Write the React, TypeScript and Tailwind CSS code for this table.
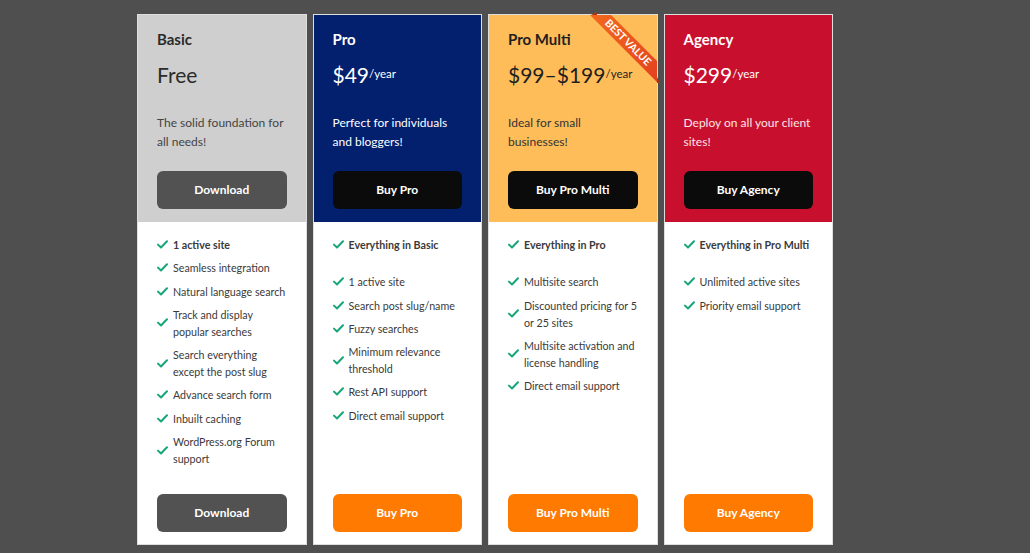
import React from 'react'

type Plan = {
    name: string
    price: string
    per?: boolean
    desc: string
    cta: string
    headerBg: string
    headerText: string
    descText: string
    ctaBg: string
    bottomBg: string
    bottomCta: string
    features: string[]
    firstGap: boolean
    ribbon?: boolean
}

const plans: Plan[] = [
    {
        name: 'Basic',
        price: 'Free',
        desc: 'The solid foundation for all needs!',
        cta: 'Download',
        headerBg: 'bg-[#cfcfcf]',
        headerText: 'text-[#2b2b2b]',
        descText: 'text-[#444]',
        ctaBg: 'bg-[#525252]',
        bottomBg: 'bg-[#525252]',
        bottomCta: 'Download',
        firstGap: false,
        features: [
            '1 active site',
            'Seamless integration',
            'Natural language search',
            'Track and display popular searches',
            'Search everything except the post slug',
            'Advance search form',
            'Inbuilt caching',
            'WordPress.org Forum support',
        ],
    },
    {
        name: 'Pro',
        price: '$49',
        per: true,
        desc: 'Perfect for individuals and bloggers!',
        cta: 'Buy Pro',
        headerBg: 'bg-[#03206f]',
        headerText: 'text-white',
        descText: 'text-white',
        ctaBg: 'bg-[#0b0b0b]',
        bottomBg: 'bg-[#ff7a00]',
        bottomCta: 'Buy Pro',
        firstGap: true,
        features: [
            'Everything in Basic',
            '1 active site',
            'Search post slug/name',
            'Fuzzy searches',
            'Minimum relevance threshold',
            'Rest API support',
            'Direct email support',
        ],
    },
    {
        name: 'Pro Multi',
        price: '$99–$199',
        per: true,
        desc: 'Ideal for small businesses!',
        cta: 'Buy Pro Multi',
        headerBg: 'bg-[#ffbd59]',
        headerText: 'text-[#1f1f1f]',
        descText: 'text-[#333]',
        ctaBg: 'bg-[#0b0b0b]',
        bottomBg: 'bg-[#ff7a00]',
        bottomCta: 'Buy Pro Multi',
        firstGap: true,
        ribbon: true,
        features: [
            'Everything in Pro',
            'Multisite search',
            'Discounted pricing for 5 or 25 sites',
            'Multisite activation and license handling',
            'Direct email support',
        ],
    },
    {
        name: 'Agency',
        price: '$299',
        per: true,
        desc: 'Deploy on all your client sites!',
        cta: 'Buy Agency',
        headerBg: 'bg-[#c8102e]',
        headerText: 'text-white',
        descText: 'text-[#fbe3e6]',
        ctaBg: 'bg-[#0b0b0b]',
        bottomBg: 'bg-[#ff7a00]',
        bottomCta: 'Buy Agency',
        firstGap: true,
        features: ['Everything in Pro Multi', 'Unlimited active sites', 'Priority email support'],
    },
]

const Check = () => (
    <svg width="11" height="9" viewBox="0 0 11 9" className="shrink-0">
        <path d="M1 4.6 L4 7.5 L10 1.3" fill="none" stroke="#17a57a" strokeWidth="2" strokeLinecap="round" strokeLinejoin="round" />
    </svg>
)

const Ribbon = () => (
    <>
        <div className="absolute -top-[3px] left-[102px] w-0 h-0 border-l-[6px] border-l-transparent border-b-[3px] border-b-[#a8380f]" />
        <div className="absolute top-[62px] -right-[3px] w-0 h-0 border-t-[6px] border-t-transparent border-l-[3px] border-l-[#a8380f]" />
        <div className="absolute top-0 right-0 w-[67px] h-[67px] overflow-hidden">
            <div className="absolute left-[-12px] top-[20px] w-[100px] h-[15px] rotate-45 bg-gradient-to-r from-[#f46a1c] to-[#e2401f] flex items-center justify-center">
                <span className="text-white text-[10.5px] font-bold leading-none">BEST VALUE</span>
            </div>
        </div>
    </>
)

const PlanCard = ({ plan }: { plan: Plan }) => (
    <div className="relative w-[169.5px] h-[531px] flex flex-col bg-white border border-[#dedede]">
        {plan.ribbon && <Ribbon />}
        <div className={`${plan.headerBg} px-[19px] pt-[14px] pb-[13px] shrink-0`}>
            <h3 className={`${plan.headerText} text-[15px] font-bold leading-[20px]`}>{plan.name}</h3>
            <div className={`${plan.headerText} mt-[12px] h-[28px] text-[21px] leading-[28px] whitespace-nowrap`}>
                {plan.price}
                {plan.per && <span className="relative -top-[5px] text-[11.5px] leading-none">/year</span>}
            </div>
            <p className={`${plan.descText} mt-[24px] text-[12px] leading-[19px]`}>{plan.desc}</p>
            <button className={`${plan.ctaBg} mt-[20px] w-full h-[38px] rounded-[6px] text-white text-[12px] font-bold`}>
                {plan.cta}
            </button>
        </div>
        <div className="flex-1 flex flex-col px-[19px] pt-[14px] pb-[12px]">
            <ul className="flex flex-col gap-[6.3px]">
                {plan.features.map((f, i) => (
                    <li
                        key={f}
                        className={`flex items-center gap-[5px] text-[10.7px] leading-[17px] text-[#3a3a3a] ${
                            i === 0 ? 'font-bold' : ''
                        } ${i === 0 && plan.firstGap ? 'mb-[14px]' : ''}`}
                    >
                        <Check />
                        <span>{f}</span>
                    </li>
                ))}
            </ul>
            <button className={`${plan.bottomBg} mt-auto w-full h-[38px] rounded-[6px] text-white text-[12px] font-bold`}>
                {plan.bottomCta}
            </button>
        </div>
    </div>
)

export default function App() {
    return (
        <div className="w-[1030px] h-[553px] bg-[#4f4f4f] pl-[137px] pt-[14px] overflow-hidden" style={{ fontFamily: 'Lato, "Open Sans", sans-serif' }}>
            <div className="flex gap-[6px]">
                {plans.map((p) => (
                    <PlanCard key={p.name} plan={p} />
                ))}
            </div>
        </div>
    )
}
